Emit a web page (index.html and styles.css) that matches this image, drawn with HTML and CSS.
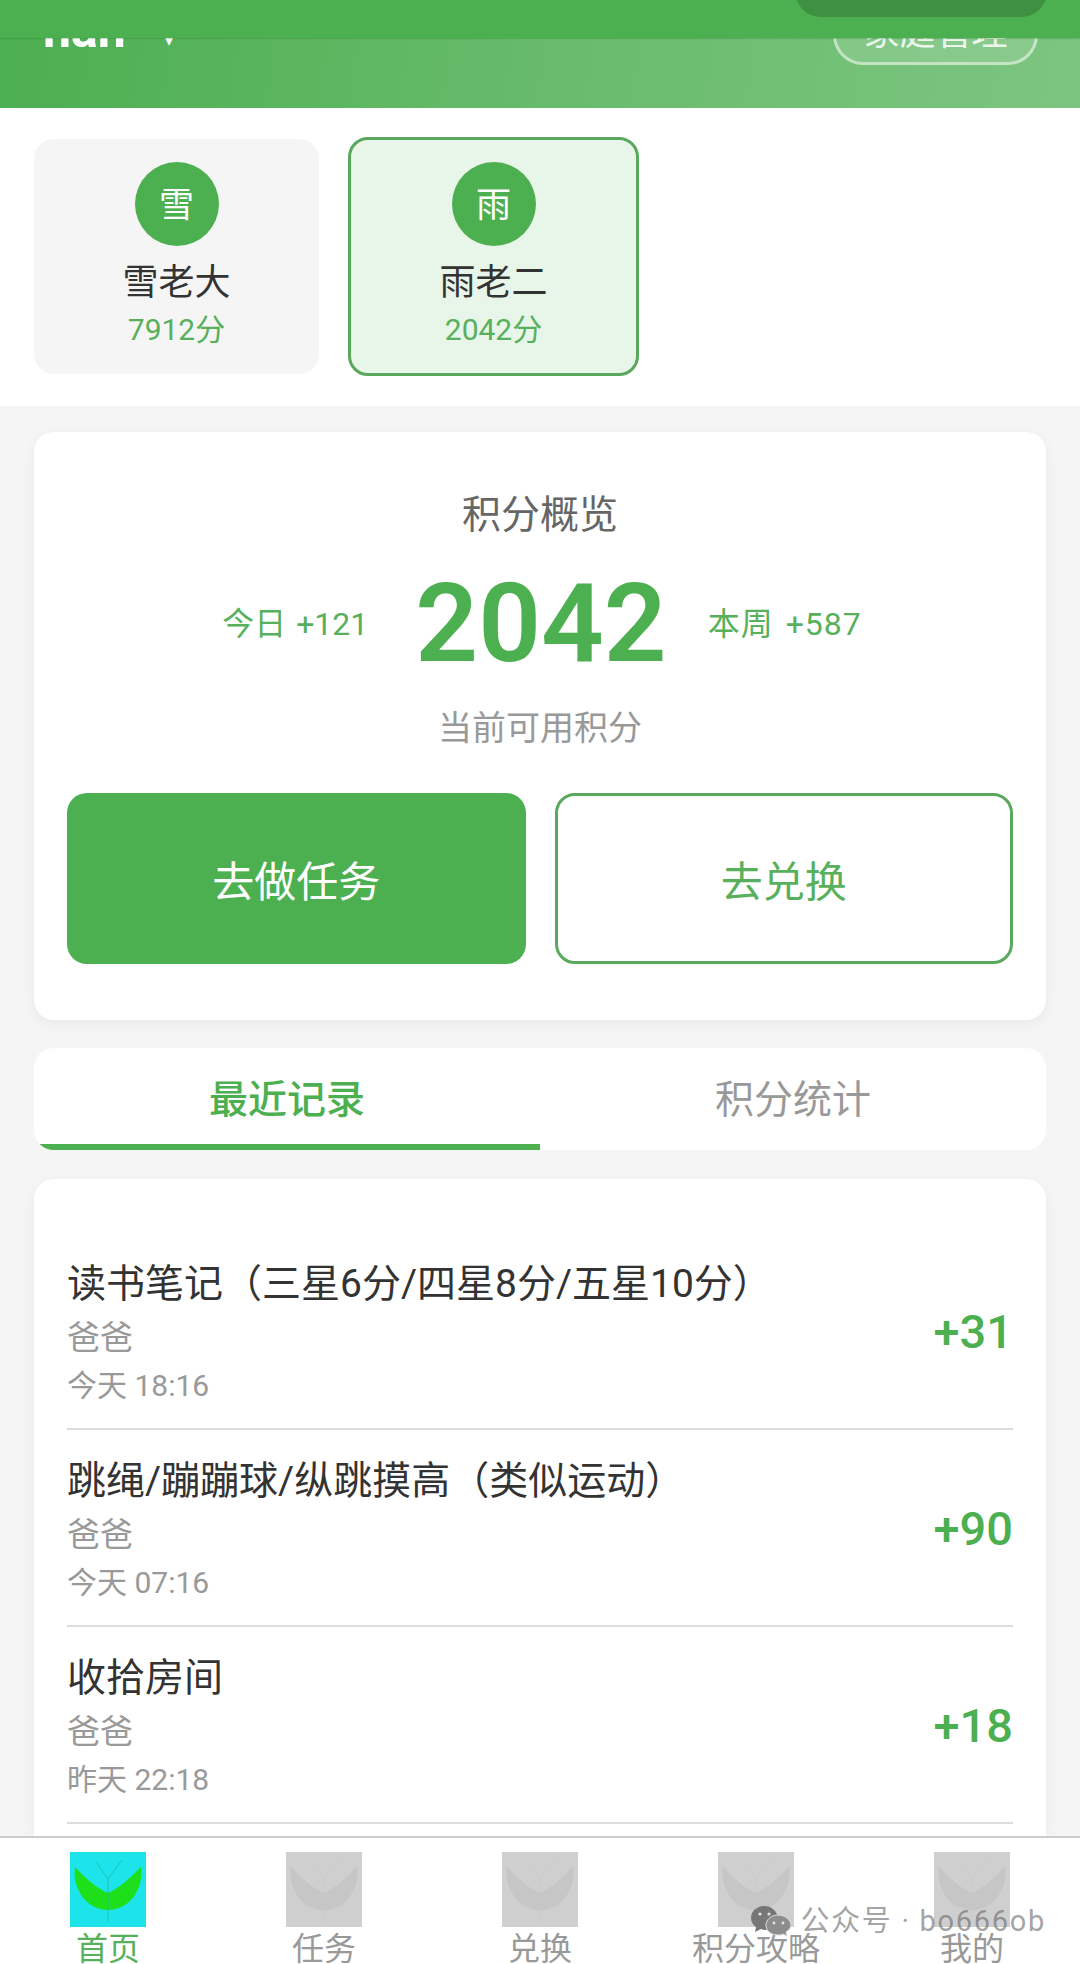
FILE: index.html
```html
<!DOCTYPE html>
<html lang="zh-CN">
  <head>
    <meta charset="UTF-8" />
    <meta name="viewport" content="width=device-width, initial-scale=1.0" />
    <title>积分概览</title>
    <link rel="stylesheet" href="styles.css">
  </head>

  <body>
    <svg class="sprites" width="0" height="0">
      <symbol id="leaf" viewBox="0 0 76 75">
        <path class="leaf-blade" d="M5 15C15 26 28 37 38 41C48 37 60 26 71 15C74 36 60 58 38 58C16 58 2 36 5 15Z" />
        <path class="leaf-vein" d="M38 70V27M38 27L26 10M38 27L52 8" />
      </symbol>
    </svg>

    <div class="status-bar"><div class="status-pill"></div></div>

    <header class="header">
      <div class="user">
        <span class="user-name">nan</span>
        <span class="user-caret">▾</span>
      </div>
      <button class="manage">家庭管理</button>
    </header>

    <section class="kids">
      <div class="kid">
        <div class="kid-avatar">雪</div>
        <div class="kid-name">雪老大</div>
        <div class="kid-score">7912分</div>
      </div>
      <div class="kid active">
        <div class="kid-avatar">雨</div>
        <div class="kid-name">雨老二</div>
        <div class="kid-score">2042分</div>
      </div>
    </section>

    <main class="content">
      <section class="overview">
        <h2 class="overview-title">积分概览</h2>
        <div class="overview-stats">
          <span class="stat today">今日 +121</span>
          <span class="total">2042</span>
          <span class="stat week">本周 +587</span>
        </div>
        <div class="overview-caption">当前可用积分</div>
        <div class="actions">
          <button class="action primary">去做任务</button>
          <button class="action outline">去兑换</button>
        </div>
      </section>

      <div class="tabs">
        <div class="tab active">最近记录</div>
        <div class="tab">积分统计</div>
      </div>

      <section class="records">
        <div class="record">
          <div class="record-info">
            <div class="record-title">读书笔记（三星6分/四星8分/五星10分）</div>
            <div class="record-by">爸爸</div>
            <div class="record-time">今天 18:16</div>
          </div>
          <div class="record-points">+31</div>
        </div>
        <div class="record">
          <div class="record-info">
            <div class="record-title">跳绳/蹦蹦球/纵跳摸高（类似运动）</div>
            <div class="record-by">爸爸</div>
            <div class="record-time">今天 07:16</div>
          </div>
          <div class="record-points">+90</div>
        </div>
        <div class="record">
          <div class="record-info">
            <div class="record-title">收拾房间</div>
            <div class="record-by">爸爸</div>
            <div class="record-time">昨天 22:18</div>
          </div>
          <div class="record-points">+18</div>
        </div>
      </section>
    </main>

    <nav class="tabbar">
      <div class="tabbar-item active">
        <svg class="tabbar-icon"><use href="#leaf" /></svg>
        <span>首页</span>
      </div>
      <div class="tabbar-item">
        <svg class="tabbar-icon"><use href="#leaf" /></svg>
        <span>任务</span>
      </div>
      <div class="tabbar-item">
        <svg class="tabbar-icon"><use href="#leaf" /></svg>
        <span>兑换</span>
      </div>
      <div class="tabbar-item">
        <svg class="tabbar-icon"><use href="#leaf" /></svg>
        <span>积分攻略</span>
      </div>
      <div class="tabbar-item">
        <svg class="tabbar-icon"><use href="#leaf" /></svg>
        <span>我的</span>
      </div>
    </nav>

    <div class="stamp">
      <svg class="stamp-icon" viewBox="0 0 40 30">
        <path class="bubble-back" d="M14 0C6 0 0 5 0 12C0 16 2 19 5 21L4 26L10 23C12 24 15 24 18 24C27 24 29 17 27 11C25 4 20 0 14 0Z" />
        <path class="bubble-front" d="M27 9C20 9 15 14 15 19C15 25 20 29 27 29C29 29 31 29 32 28L36 30L35 26C38 24 40 22 40 19C40 14 34 9 27 9Z" />
        <circle class="bubble-eye" cx="9" cy="8" r="1.6" />
        <circle class="bubble-eye" cx="18" cy="8" r="1.6" />
        <circle class="bubble-eye" cx="23" cy="17" r="1.4" />
        <circle class="bubble-eye" cx="32" cy="17" r="1.4" />
      </svg>
      <span>公众号 · bo666ob</span>
    </div>
  </body>
</html>
```

FILE: styles.css
```css
* {
  padding: 0;
  margin: 0;
  box-sizing: border-box;
}

body {
  position: relative;
  width: 1080px;
  height: 1964px;
  display: flex;
  flex-direction: column;
  overflow: hidden;
  background: #f5f5f5;
  color: #333;
  font-family: Roboto, "Noto Sans CJK SC", sans-serif;
}

button {
  font-family: inherit;
  background: none;
  border: none;
}

.sprites {
  position: absolute;
}

/* top bar sits over the scrolled header */
.status-bar {
  position: absolute;
  top: 0;
  left: 0;
  width: 100%;
  height: 38px;
  background: #4caf50;
  box-shadow: 0 1px 1px rgba(40, 110, 45, 0.25);
}

.status-pill {
  position: absolute;
  top: -20px;
  right: 33px;
  width: 252px;
  height: 37px;
  border-radius: 0 0 26px 26px;
  background: #3f9142;
}

.header {
  flex: none;
  height: 108px;
  display: flex;
  justify-content: space-between;
  align-items: flex-end;
  padding: 0 42px 43px 43px;
  overflow: hidden;
  background: linear-gradient(100deg, #4caf50 0%, #6cbd70 60%, #7cc580 100%);
  color: white;
}

.user {
  display: flex;
  align-items: flex-end;
  margin-bottom: 10px;
}

.user-name {
  font-size: 50px;
  font-weight: 700;
  line-height: 1;
}

.user-caret {
  margin-left: 38px;
  margin-bottom: 6px;
  font-size: 20px;
  line-height: 1;
}

.manage {
  flex: none;
  width: 205px;
  height: 72px;
  border: 3px solid rgba(255, 255, 255, 0.5);
  border-radius: 30px;
  background: rgba(255, 255, 255, 0.12);
  color: rgba(255, 255, 255, 0.85);
  font-size: 36px;
}

.kids {
  flex: none;
  display: flex;
  align-items: center;
  gap: 29px;
  padding: 29px 34px 30px;
  background: white;
}

.kid {
  width: 285px;
  height: 235px;
  display: flex;
  flex-direction: column;
  align-items: center;
  padding-top: 23px;
  border-radius: 20px;
  background: #f5f5f5;
}

.kid.active {
  width: 291px;
  height: 239px;
  padding-top: 22px;
  border: 3px solid #5aa85e;
  background: #e8f5e9;
}

.kid-avatar {
  width: 84px;
  height: 84px;
  display: flex;
  justify-content: center;
  align-items: center;
  padding-bottom: 5px;
  border-radius: 50%;
  background: #4caf50;
  color: white;
  font-size: 35px;
}

.kid-name {
  margin-top: 15px;
  font-size: 36px;
  line-height: 44px;
}

.kid-score {
  margin-top: 5px;
  color: #58b05c;
  font-size: 30px;
  line-height: 40px;
}

.content {
  flex: 1;
  min-height: 0;
  display: flex;
  flex-direction: column;
  padding: 26px 34px 0;
}

.overview {
  flex: none;
  padding: 58px 33px 56px;
  border-radius: 20px;
  background: white;
  box-shadow: 0 4px 14px rgba(0, 0, 0, 0.05);
  text-align: center;
}

.overview-title {
  color: #666;
  font-size: 39px;
  font-weight: 400;
  line-height: 50px;
}

.overview-stats {
  display: flex;
  justify-content: center;
  align-items: center;
  gap: 41px;
  margin-top: 24px;
  padding-left: 4px;
}

.stat {
  margin-bottom: 6px;
  color: #58b05c;
  font-size: 32px;
}

.stat.today {
  margin-right: 6px;
  word-spacing: 2px;
}

.stat.week {
  letter-spacing: 1px;
  word-spacing: 3px;
}

.total {
  color: #4caf50;
  font-size: 110px;
  font-weight: 600;
  line-height: 120px;
}

.overview-caption {
  margin-top: 22px;
  color: #999;
  font-size: 34px;
  line-height: 44px;
}

.actions {
  display: grid;
  grid-template-columns: 1fr 1fr;
  gap: 29px;
  margin-top: 43px;
}

.action {
  height: 171px;
  border-radius: 20px;
  font-size: 42px;
}

.action.primary {
  background: #4caf50;
  color: white;
}

.action.outline {
  border: 3px solid #5aa85e;
  background: white;
  color: #58b05c;
}

.tabs {
  flex: none;
  display: flex;
  margin-top: 28px;
  overflow: hidden;
  border-radius: 20px;
  background: white;
}

.tab {
  flex: 1;
  height: 102px;
  display: flex;
  justify-content: center;
  align-items: center;
  border-bottom: 6px solid transparent;
  color: #999;
  font-size: 39px;
}

.tab.active {
  border-bottom-color: #4caf50;
  color: #4caf50;
  font-weight: 500;
}

.records {
  flex: 1;
  margin-top: 29px;
  padding: 54px 33px 0;
  border-radius: 20px 20px 0 0;
  background: white;
  box-shadow: 0 4px 14px rgba(0, 0, 0, 0.05);
}

.record {
  display: flex;
  justify-content: space-between;
  align-items: center;
  padding: 26px 0 24px;
  border-bottom: 2px solid #ddd;
}

.record-title {
  font-size: 39px;
  line-height: 50px;
}

.record-by {
  margin-top: 9px;
  color: #999;
  font-size: 33px;
  line-height: 40px;
}

.record-time {
  margin-top: 10px;
  color: #999;
  font-size: 30px;
  line-height: 36px;
}

.record-points {
  color: #4caf50;
  font-size: 47px;
  font-weight: 500;
}

.tabbar {
  flex: none;
  height: 128px;
  display: grid;
  grid-template-columns: repeat(5, 1fr);
  padding-top: 14px;
  border-top: 2px solid #ccc;
  background: white;
  color: #999;
  font-size: 32px;
}

.tabbar-item {
  display: flex;
  flex-direction: column;
  align-items: center;
}

.tabbar-item span {
  margin-top: 7px;
  line-height: 30px;
}

.tabbar-icon {
  flex: none;
  width: 76px;
  height: 75px;
  margin-right: 1px;
  background: #cfcfcf;
  --blade: #c6c6c6;
  --vein: #c9c9c9;
}

.tabbar-item.active {
  color: #58b05c;
}

.tabbar-item.active .tabbar-icon {
  background: #1de3ea;
  --blade: #1ee01a;
  --vein: #22b8a8;
}

.leaf-blade {
  fill: var(--blade);
}

.leaf-vein {
  fill: none;
  stroke: var(--vein);
  stroke-width: 0.8;
}

/* account stamp printed across the tab bar */
.stamp {
  position: absolute;
  right: 34px;
  bottom: 28px;
  display: flex;
  align-items: center;
  gap: 9px;
  color: rgba(105, 105, 105, 0.62);
  font-size: 29px;
  letter-spacing: 1.7px;
  line-height: 26px;
}

.stamp-icon {
  width: 40px;
  height: 30px;
}

.bubble-back {
  fill: #777;
}

.bubble-front {
  fill: #8d8d8d;
  stroke: #ddd;
  stroke-width: 1;
}

.bubble-eye {
  fill: #e4e4e4;
}
```
